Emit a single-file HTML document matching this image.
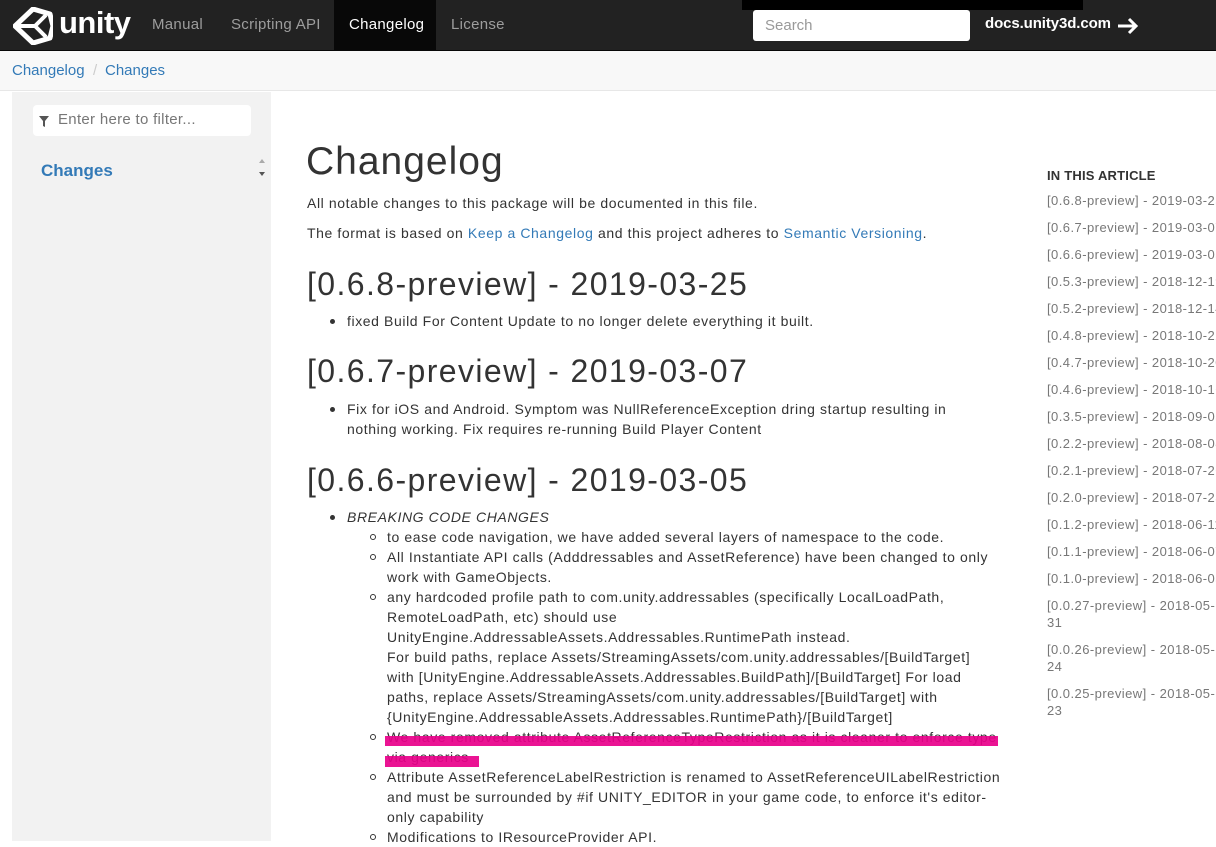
<!DOCTYPE html>
<html><head><meta charset="utf-8"><style>
*{margin:0;padding:0;box-sizing:border-box}
body{width:1216px;height:841px;overflow:hidden;background:#fff;font-family:"Liberation Sans",sans-serif;font-size:14px;color:#333;position:relative}
.nav{position:absolute;left:0;top:0;width:1216px;height:51px;background:#222;border-bottom:1px solid #080808}
.nav a{position:absolute;top:1px;height:50px;line-height:48px;font-size:15px;color:#9d9d9d;letter-spacing:0.3px}
.abs{position:absolute}
.crumb{position:absolute;top:51px;left:0;width:1216px;height:40px;background:#f8f8f8;border-bottom:1px solid #e7e7e7}
.side{position:absolute;left:12px;top:92px;width:259px;height:749px;background:#f2f2f2}
a{color:#337ab7;text-decoration:none}
h2{position:absolute;left:307px;font-size:32px;font-weight:normal;color:#333;line-height:36px;white-space:nowrap;letter-spacing:1.4px}
.l{position:absolute;line-height:20px;white-space:nowrap;letter-spacing:0.6px}
.b1{position:absolute;width:5px;height:5px;border-radius:50%;background:#333}
.b2{position:absolute;width:6px;height:6px;border-radius:50%;border:1px solid #333}
.toc div{position:absolute;left:1047px;font-size:13px;color:#777;line-height:17px;white-space:nowrap;letter-spacing:0.45px}
</style></head><body>
<div class="nav">
<svg class="abs" style="left:13px;top:7px" width="40" height="38" viewBox="0 0 40 38"><path d="M2 19 L20 2 L37 7 L40 19 L37 31 L20 36 Z" fill="none" stroke="#fff" stroke-width="5" stroke-linejoin="round"/><path d="M4 19 H24 M22 19 L33 8 M22 19 L33 30" stroke="#fff" stroke-width="4"/></svg>
<div class="abs" style="left:59px;top:2px;font-size:31px;font-weight:bold;color:#fff;line-height:42px;letter-spacing:-0.5px">unity</div>
<a style="left:152px">Manual</a>
<a style="left:231px">Scripting API</a>
<div class="abs" style="left:334px;top:0;width:102px;height:50px;background:#080808"></div>
<a style="left:349px;color:#fff">Changelog</a>
<a style="left:451px">License</a>
<div class="abs" style="left:742px;top:0;width:341px;height:10px;background:#000"></div>
<div class="abs" style="left:753px;top:10px;width:217px;height:31px;background:#fff;border-radius:3px;padding:7px 12px;color:#999;font-size:15px">Search</div>
<div class="abs" style="left:985px;top:15px;color:#fff;font-size:15px;font-weight:bold;letter-spacing:-0.1px">docs.unity3d.com</div>
<svg class="abs" style="left:1117px;top:17px" width="22" height="18" viewBox="0 0 22 18"><path d="M1 9 H19 M12 2 L19 9 L12 16" stroke="#fff" stroke-width="3" fill="none"/></svg>
</div>
<div class="crumb"><a class="abs" style="left:12px;top:11px;font-size:15px">Changelog</a><span class="abs" style="left:93px;top:11px;color:#ccc;font-size:15px">/</span><a class="abs" style="left:105px;top:11px;font-size:15px">Changes</a></div>
<div class="side">
<div class="abs" style="left:21px;top:13px;width:218px;height:31px;background:#fff;border-radius:4px"></div>
<svg class="abs" style="left:27px;top:24px" width="10" height="11" viewBox="0 0 10 11"><path d="M0 0 H10 L6 5 V11 L4 10 V5 Z" fill="#555"/></svg>
<div class="abs" style="left:46px;top:19px;color:#777;font-size:15px;letter-spacing:0.3px">Enter here to filter...</div>
<div class="abs" style="left:29px;top:69px;color:#337ab7;font-size:17px;font-weight:bold">Changes</div>
<div class="abs" style="left:247px;top:64px;width:0;height:0;border:3px solid transparent;border-bottom:4px solid #aaa"></div>
<div class="abs" style="left:247px;top:80px;width:0;height:0;border:3px solid transparent;border-top:4px solid #555"></div>
</div>
<h1 class="abs" style="left:306px;top:140px;font-size:39px;font-weight:normal;color:#333;line-height:44px;letter-spacing:1px">Changelog</h1>
<div class="l" style="left:307px;top:193px">All notable changes to this package will be documented in this file.</div>
<div class="l" style="left:307px;top:223px">The format is based on <a>Keep a Changelog</a> and this project adheres to <a>Semantic Versioning</a>.</div>
<h2 style="top:266px">[0.6.8-preview] - 2019-03-25</h2>
<div class="b1" style="left:330px;top:319px"></div><div class="l" style="left:347px;top:311px">fixed Build For Content Update to no longer delete everything it built.</div>
<h2 style="top:353px">[0.6.7-preview] - 2019-03-07</h2>
<div class="b1" style="left:330px;top:407px"></div><div class="l" style="left:347px;top:399px">Fix for iOS and Android. Symptom was NullReferenceException dring startup resulting in<br>nothing working. Fix requires re-running Build Player Content</div>
<h2 style="top:462px">[0.6.6-preview] - 2019-03-05</h2>
<div class="b1" style="left:330px;top:515px"></div><div class="l" style="left:347px;top:507px;font-style:italic">BREAKING CODE CHANGES</div>
<div class="b2" style="left:370px;top:534px"></div><div class="l" style="left:387px;top:527px">to ease code navigation, we have added several layers of namespace to the code.</div>
<div class="b2" style="left:370px;top:554px"></div><div class="l" style="left:387px;top:547px">All Instantiate API calls (Adddressables and AssetReference) have been changed to only<br>work with GameObjects.</div>
<div class="b2" style="left:370px;top:594px"></div><div class="l" style="left:387px;top:587px">any hardcoded profile path to com.unity.addressables (specifically LocalLoadPath,<br>RemoteLoadPath, etc) should use<br>UnityEngine.AddressableAssets.Addressables.RuntimePath instead.<br>For build paths, replace Assets/StreamingAssets/com.unity.addressables/[BuildTarget]<br>with [UnityEngine.AddressableAssets.Addressables.BuildPath]/[BuildTarget] For load<br>paths, replace Assets/StreamingAssets/com.unity.addressables/[BuildTarget] with<br>{UnityEngine.AddressableAssets.Addressables.RuntimePath}/[BuildTarget]</div>
<div class="b2" style="left:370px;top:734px"></div><div class="l" style="left:387px;top:727px">We have removed attribute AssetReferenceTypeRestriction as it is cleaner to enforce type<br>via generics</div>
<div class="abs" style="left:385px;top:736px;width:613px;height:10px;background:#e8008a;opacity:.92"></div>
<div class="abs" style="left:385px;top:756px;width:94px;height:11px;background:#e8008a;opacity:.92"></div>
<div class="b2" style="left:370px;top:774px"></div><div class="l" style="left:387px;top:767px">Attribute AssetReferenceLabelRestriction is renamed to AssetReferenceUILabelRestriction<br>and must be surrounded by #if UNITY_EDITOR in your game code, to enforce it's editor-<br>only capability</div>
<div class="b2" style="left:370px;top:834px"></div><div class="l" style="left:387px;top:827px">Modifications to IResourceProvider API.</div>
<div class="toc">
<div style="top:167px;font-weight:bold;color:#333;font-size:13px;letter-spacing:0.2px">IN THIS ARTICLE</div>
<div style="top:192px">[0.6.8-preview] - 2019-03-25</div>
<div style="top:219px">[0.6.7-preview] - 2019-03-07</div>
<div style="top:246px">[0.6.6-preview] - 2019-03-05</div>
<div style="top:273px">[0.5.3-preview] - 2018-12-19</div>
<div style="top:300px">[0.5.2-preview] - 2018-12-14</div>
<div style="top:327px">[0.4.8-preview] - 2018-10-22</div>
<div style="top:354px">[0.4.7-preview] - 2018-10-20</div>
<div style="top:381px">[0.4.6-preview] - 2018-10-16</div>
<div style="top:408px">[0.3.5-preview] - 2018-09-05</div>
<div style="top:435px">[0.2.2-preview] - 2018-08-08</div>
<div style="top:462px">[0.2.1-preview] - 2018-07-26</div>
<div style="top:489px">[0.2.0-preview] - 2018-07-23</div>
<div style="top:516px">[0.1.2-preview] - 2018-06-11</div>
<div style="top:543px">[0.1.1-preview] - 2018-06-07</div>
<div style="top:570px">[0.1.0-preview] - 2018-06-05</div>
<div style="top:597px">[0.0.27-preview] - 2018-05-<br>31</div>
<div style="top:641px">[0.0.26-preview] - 2018-05-<br>24</div>
<div style="top:685px">[0.0.25-preview] - 2018-05-<br>23</div>
</div>
</body></html>
